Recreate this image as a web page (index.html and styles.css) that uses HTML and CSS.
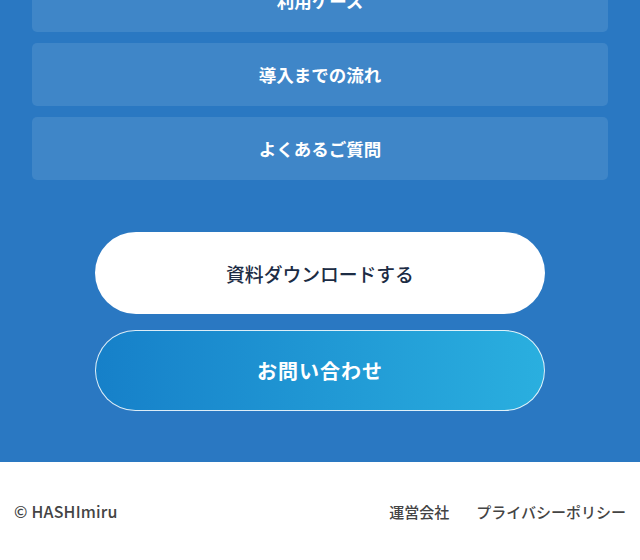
FILE: index.html
```html
<!DOCTYPE html>
<html lang="ja">
<head>
<meta charset="utf-8">
<link rel="stylesheet" href="styles.css">
</head>
<body>
<section class="menu">
  <ul class="nav">
    <li class="nav-item">利用ケース</li>
    <li class="nav-item">導入までの流れ</li>
    <li class="nav-item">よくあるご質問</li>
  </ul>
  <div class="actions">
    <a class="btn btn-white">資料ダウンロードする</a>
    <a class="btn btn-grad">お問い合わせ</a>
  </div>
</section>
<footer class="footer">
  <span class="copy">© HASHImiru</span>
  <nav class="links">
    <a>運営会社</a>
    <a>プライバシーポリシー</a>
  </nav>
</footer>
</body>
</html>
```
FILE: styles.css
```css
* { box-sizing: border-box; }
html, body { margin: 0; padding: 0; }
body {
  font-family: "Noto Sans CJK JP", "Noto Sans", sans-serif;
  background: #fff;
}
.menu {
  background: #2a78c2;
  height: 462px;
  overflow: hidden;
  padding: 0 32px;
}
.nav {
  list-style: none;
  margin: -31px 0 0;
  padding: 0;
  display: flex;
  flex-direction: column;
  gap: 11px;
}
.nav-item {
  height: 63px;
  border-radius: 5px;
  background: #3f86c8;
  color: #fff;
  font-weight: 700;
  font-size: 17.5px;
  display: flex;
  align-items: center;
  justify-content: center;
}
.actions {
  margin-top: 52px;
  display: flex;
  flex-direction: column;
  align-items: center;
  gap: 16px;
}
.btn {
  width: 450px;
  height: 82px;
  border-radius: 41px;
  display: flex;
  align-items: center;
  justify-content: center;
  font-weight: 700;
  text-decoration: none;
}
.btn-white {
  background: #fff;
  color: #1c2c44;
  font-size: 18.8px;
  font-weight: 500;
}
.btn-grad {
  height: 81px;
  background: linear-gradient(90deg, #1680c9 0%, #2aafdf 100%);
  border: 1.5px solid rgba(255,255,255,0.85);
  color: #fff;
  font-size: 20px;
  letter-spacing: 1px;
}
.footer {
  height: 98px;
  display: flex;
  align-items: center;
  justify-content: space-between;
  padding: 0 14px 0 14px;
  color: #444;
}
.copy {
  font-size: 16px;
  font-weight: 500;
  letter-spacing: 0.2px;
}
.links {
  display: flex;
  gap: 27px;
  font-size: 15px;
  font-weight: 500;
}
```
